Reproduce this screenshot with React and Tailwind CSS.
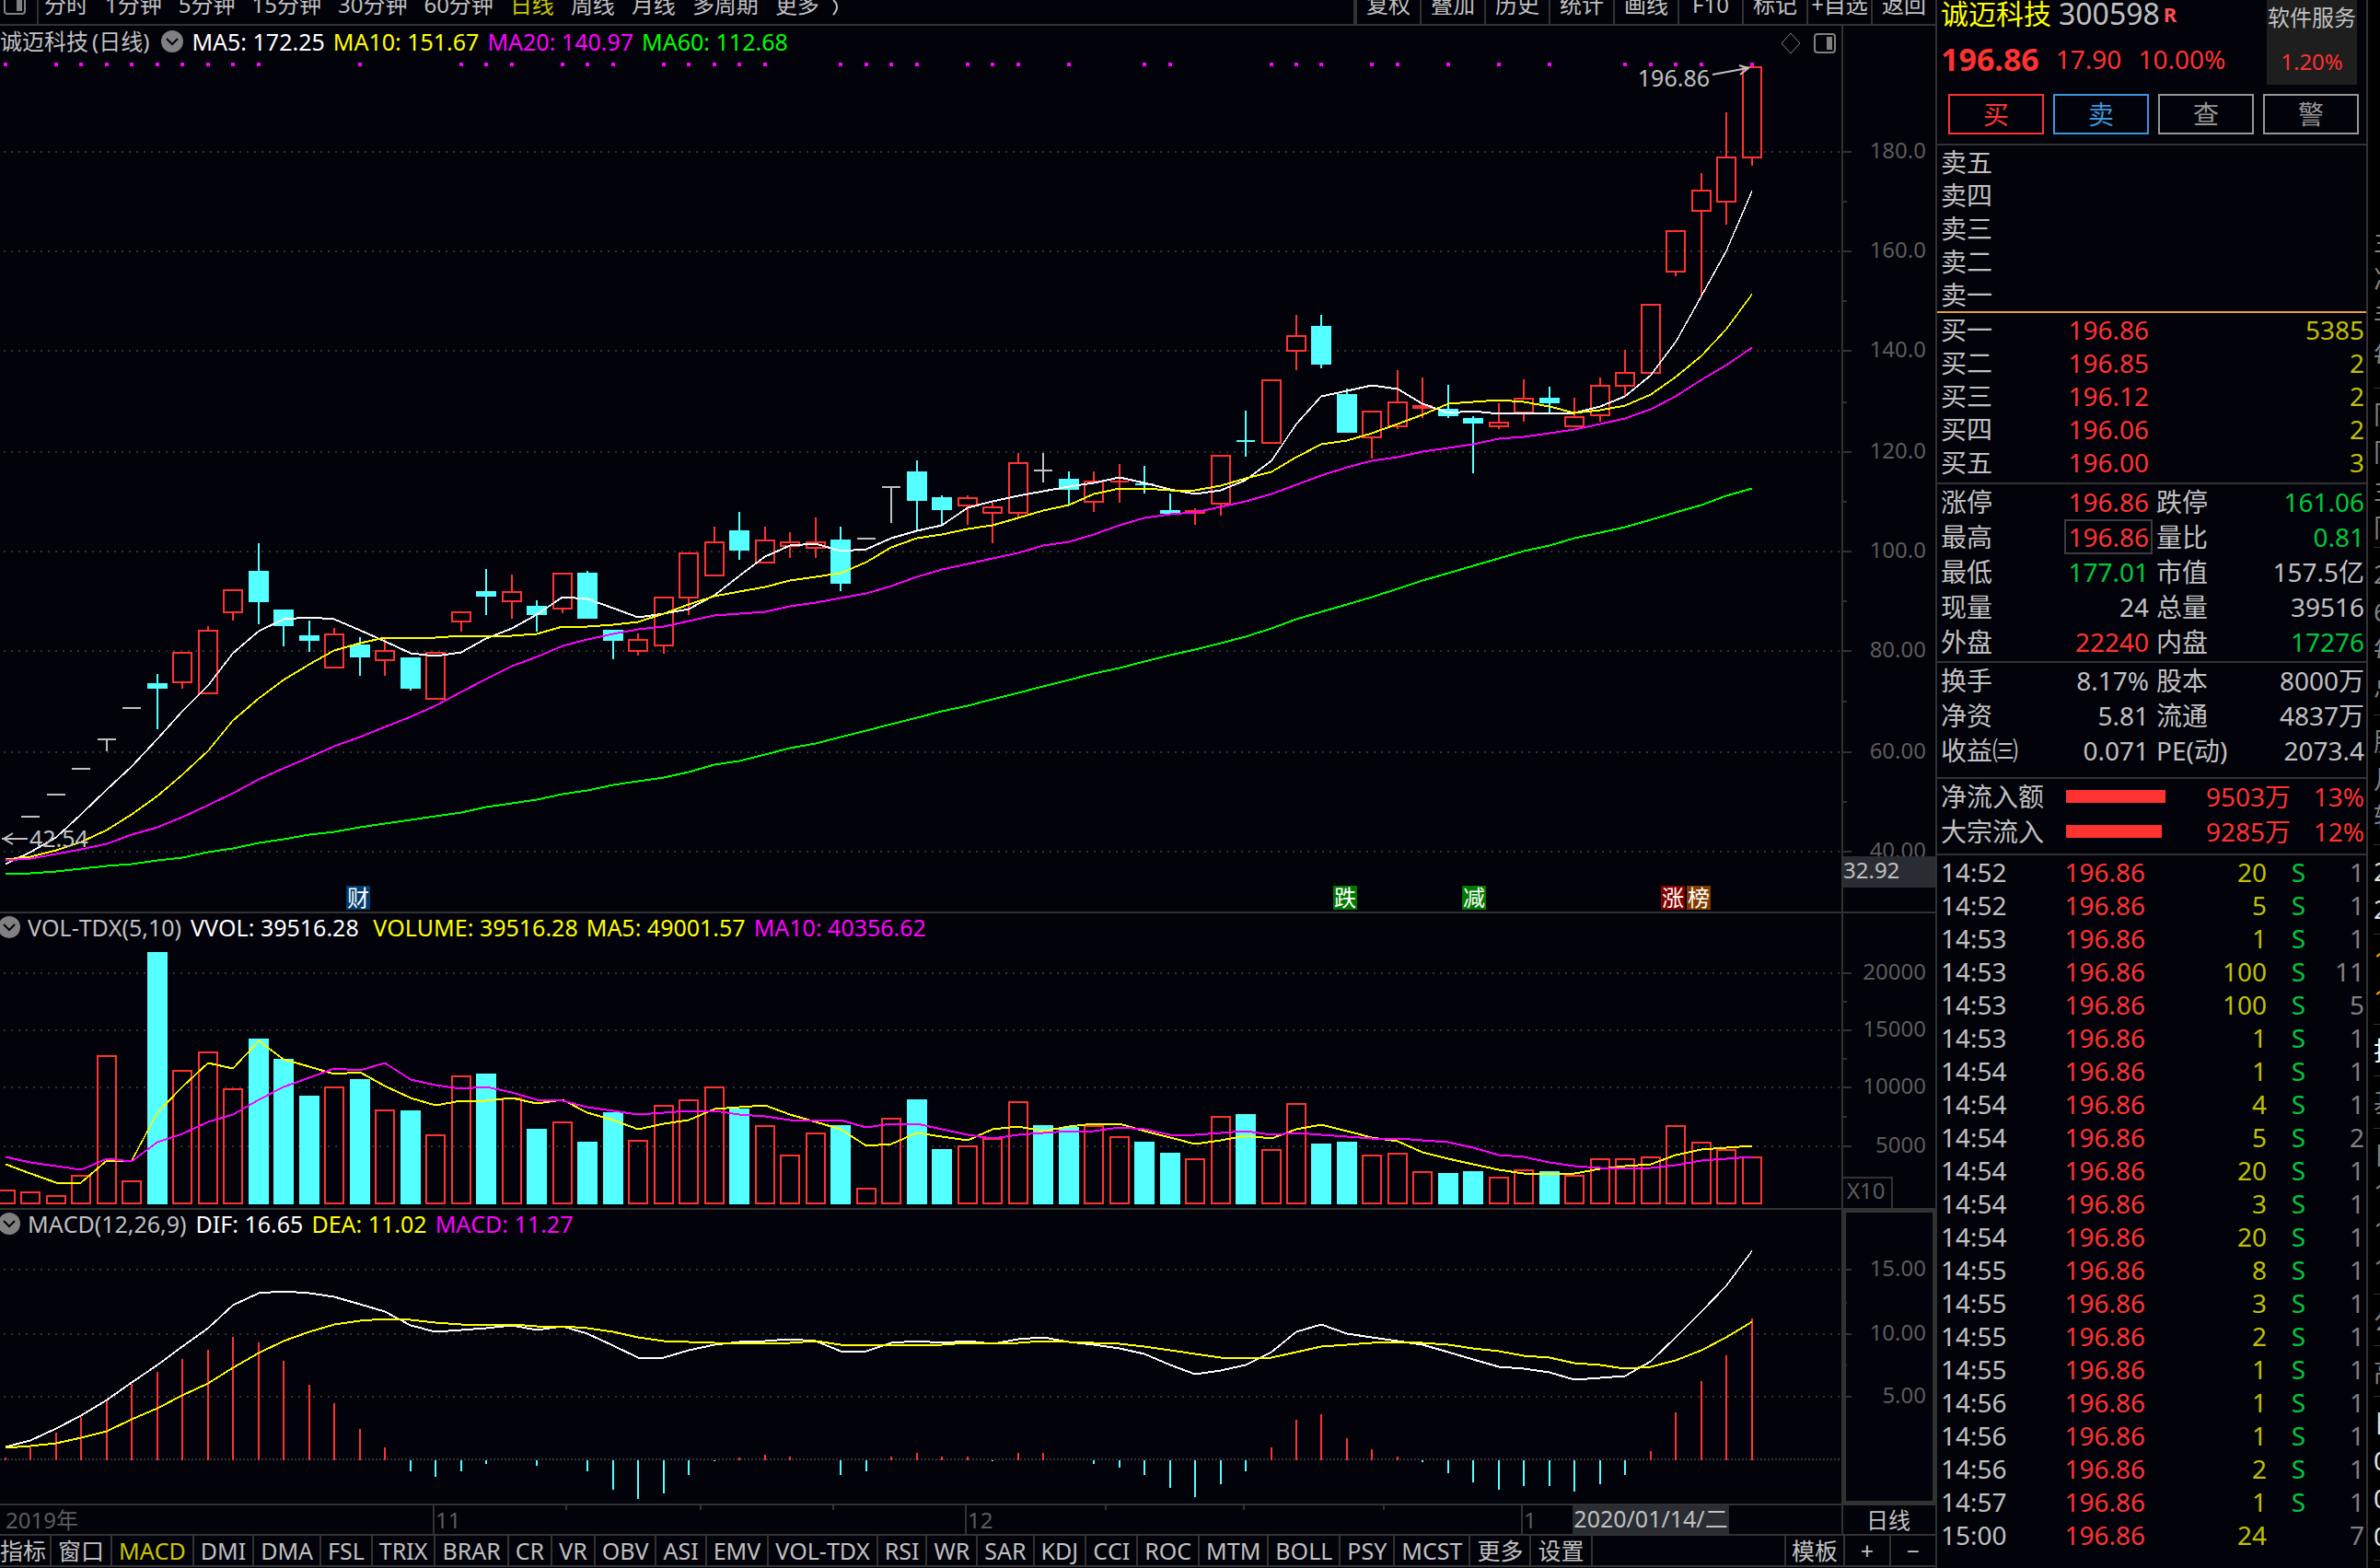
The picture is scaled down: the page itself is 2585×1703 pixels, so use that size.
// src/App.jsx
import { Fragment } from "react";

const RED = "#ff3232";
const CYAN = "#54ffff";
const GRAY = "#c0c0c0";
const LINE = "#323232";

const FIRST = 6;
const STEP = 27.49;
const cx = (i) => Math.round(FIRST + STEP * i);

// kind, high, top, bottom, low  (r = up, c = down, d = flat)
const candles = [
  ["d", 911, 911, 911, 911], ["d", 887, 887, 887, 887], ["d", 863, 863, 863, 863], ["d", 835, 835, 835, 835],
  ["d", 803, 803, 803, 816], ["d", 769, 769, 769, 769], ["c", 732, 742, 748, 792], ["r", 709, 709, 741, 748],
  ["r", 680, 685, 753, 753], ["r", 641, 641, 665, 674], ["c", 590, 620, 654, 678], ["c", 662, 662, 680, 702],
  ["c", 674, 690, 696, 708], ["r", 682, 689, 725, 725], ["c", 692, 700, 714, 734], ["r", 694, 707, 717, 734],
  ["c", 714, 714, 748, 750], ["r", 709, 709, 759, 759], ["r", 665, 665, 675, 686], ["c", 618, 642, 648, 668],
  ["r", 624, 643, 653, 672], ["c", 652, 658, 668, 686], ["r", 623, 623, 661, 666], ["c", 620, 622, 672, 672],
  ["c", 684, 684, 696, 716], ["r", 688, 695, 707, 712], ["r", 649, 649, 701, 710], ["r", 601, 601, 649, 668],
  ["r", 572, 589, 625, 625], ["c", 556, 576, 598, 608], ["r", 572, 587, 611, 611], ["r", 578, 589, 593, 606],
  ["r", 562, 589, 595, 606], ["c", 572, 586, 634, 642], ["d", 585, 585, 585, 585], ["d", 529, 529, 529, 568],
  ["c", 500, 512, 544, 576], ["c", 538, 540, 554, 570], ["r", 538, 541, 549, 570], ["r", 546, 551, 557, 590],
  ["r", 492, 503, 557, 563], ["d", 492, 511, 511, 524], ["c", 512, 520, 532, 548], ["r", 512, 523, 545, 556],
  ["r", 504, 523, 523, 546], ["c", 506, 526, 526, 536], ["c", 536, 554, 558, 558], ["r", 552, 555, 557, 570],
  ["r", 495, 495, 547, 560], ["c", 446, 479, 479, 496], ["r", 413, 413, 481, 481], ["r", 342, 365, 381, 402],
  ["c", 342, 354, 396, 400], ["c", 422, 428, 470, 470], ["r", 447, 447, 475, 498], ["r", 402, 437, 463, 466],
  ["r", 410, 441, 443, 454], ["c", 418, 444, 452, 454], ["c", 452, 454, 460, 514], ["r", 438, 459, 463, 466],
  ["r", 412, 433, 448, 458], ["c", 420, 432, 438, 448], ["r", 432, 453, 463, 463], ["r", 410, 419, 451, 458],
  ["r", 380, 405, 419, 430], ["r", 331, 331, 405, 405], ["r", 251, 251, 295, 300], ["r", 188, 207, 229, 322],
  ["r", 122, 171, 219, 244], ["r", 73, 73, 171, 180],
];

const ma5 = [939, 926, 910, 885, 858, 833, 803, 773, 745, 710, 686, 673, 671, 673, 685, 697, 710, 713, 709, 694, 683, 668, 649, 651, 661, 671, 667, 662, 647, 626, 605, 593, 591, 599, 597, 585, 577, 571, 552, 545, 539, 534, 529, 525, 519, 525, 532, 537, 533, 522, 501, 461, 431, 425, 419, 423, 439, 449, 447, 450, 449, 449, 449, 442, 431, 408, 372, 322, 273, 208];
const ma10 = [934, 931, 924, 915, 902, 885, 865, 842, 816, 783, 759, 739, 722, 707, 699, 693, 693, 693, 691, 691, 691, 689, 681, 681, 679, 676, 667, 657, 648, 643, 638, 631, 627, 623, 611, 595, 585, 581, 575, 571, 563, 555, 549, 537, 531, 531, 533, 533, 528, 520, 513, 497, 483, 479, 471, 461, 451, 439, 437, 435, 437, 442, 449, 446, 441, 429, 410, 387, 358, 320];
const ma20 = [935, 933, 928, 923, 917, 907, 899, 888, 875, 862, 847, 835, 823, 811, 801, 790, 779, 767, 752, 738, 724, 714, 702, 695, 689, 684, 681, 675, 669, 667, 665, 659, 655, 650, 645, 637, 627, 619, 613, 607, 601, 593, 589, 581, 571, 563, 559, 557, 551, 545, 537, 527, 517, 508, 501, 497, 491, 487, 483, 477, 475, 471, 467, 461, 455, 445, 431, 413, 397, 378];
const ma60 = [949, 949, 947, 944, 941, 939, 935, 932, 926, 922, 916, 912, 907, 904, 899, 895, 891, 887, 883, 877, 873, 869, 863, 859, 853, 849, 845, 839, 831, 827, 820, 813, 808, 801, 794, 787, 780, 773, 767, 760, 753, 746, 739, 732, 726, 719, 712, 706, 699, 692, 683, 673, 665, 657, 649, 640, 631, 623, 615, 607, 599, 593, 585, 579, 573, 565, 557, 549, 539, 531];

const volKinds = "rrrrrrcrrrcccrcrcrrcrcrccrrrrcrrrcrrccrrrccrrccrrcrrccrrrccrrcrrrrrrrr";
const volTops = [1293, 1295, 1299, 1277, 1147, 1283, 1034, 1163, 1143, 1183, 1128, 1150, 1190, 1181, 1172, 1206, 1206, 1233, 1169, 1166, 1193, 1226, 1219, 1240, 1208, 1239, 1201, 1195, 1181, 1204, 1223, 1255, 1231, 1222, 1291, 1215, 1194, 1248, 1245, 1237, 1197, 1222, 1224, 1223, 1235, 1240, 1252, 1259, 1213, 1210, 1249, 1199, 1242, 1240, 1255, 1253, 1273, 1274, 1272, 1279, 1271, 1272, 1277, 1259, 1259, 1257, 1223, 1241, 1249, 1257];
const volMa5 = [1265, 1275, 1285, 1285, 1261, 1261, 1209, 1181, 1155, 1161, 1131, 1151, 1159, 1167, 1165, 1180, 1193, 1201, 1196, 1196, 1193, 1199, 1195, 1209, 1217, 1227, 1221, 1217, 1205, 1203, 1201, 1211, 1219, 1227, 1245, 1243, 1231, 1235, 1239, 1227, 1224, 1229, 1224, 1221, 1221, 1229, 1236, 1243, 1239, 1234, 1237, 1227, 1222, 1229, 1236, 1240, 1252, 1259, 1265, 1271, 1275, 1275, 1275, 1270, 1267, 1265, 1255, 1249, 1247, 1245];
const volMa10 = [1257, 1263, 1267, 1271, 1259, 1262, 1241, 1232, 1219, 1211, 1195, 1181, 1171, 1161, 1163, 1155, 1173, 1179, 1183, 1181, 1187, 1195, 1196, 1203, 1207, 1211, 1209, 1207, 1207, 1211, 1213, 1217, 1217, 1217, 1225, 1221, 1221, 1227, 1233, 1237, 1233, 1231, 1229, 1229, 1225, 1227, 1233, 1233, 1231, 1229, 1233, 1231, 1233, 1235, 1237, 1237, 1239, 1241, 1247, 1255, 1257, 1263, 1267, 1269, 1269, 1269, 1266, 1261, 1259, 1257];

const dif = [1572, 1565, 1552, 1538, 1521, 1502, 1483, 1463, 1443, 1418, 1405, 1403, 1405, 1409, 1417, 1425, 1440, 1447, 1445, 1443, 1440, 1445, 1441, 1449, 1462, 1475, 1475, 1467, 1461, 1458, 1457, 1455, 1457, 1468, 1468, 1459, 1457, 1459, 1457, 1460, 1455, 1453, 1458, 1461, 1465, 1471, 1483, 1493, 1489, 1483, 1469, 1447, 1439, 1449, 1453, 1457, 1461, 1469, 1477, 1485, 1487, 1491, 1499, 1497, 1495, 1479, 1453, 1425, 1397, 1359];
const dea = [1573, 1571, 1568, 1562, 1555, 1542, 1530, 1516, 1503, 1486, 1470, 1457, 1447, 1439, 1435, 1433, 1434, 1437, 1439, 1439, 1439, 1441, 1441, 1443, 1447, 1453, 1457, 1458, 1459, 1459, 1459, 1459, 1457, 1461, 1461, 1461, 1461, 1461, 1459, 1459, 1459, 1457, 1458, 1459, 1460, 1463, 1467, 1471, 1475, 1476, 1475, 1469, 1463, 1461, 1459, 1458, 1459, 1461, 1465, 1468, 1473, 1475, 1481, 1483, 1487, 1485, 1478, 1467, 1453, 1436];
const hist = [1583, 1572, 1556, 1539, 1521, 1503, 1490, 1476, 1466, 1452, 1458, 1478, 1504, 1524, 1552, 1572, 1598, 1604, 1598, 1590, 1585, 1592, 1585, 1598, 1618, 1628, 1622, 1602, 1587, 1583, 1580, 1582, 1585, 1602, 1598, 1582, 1578, 1582, 1582, 1587, 1578, 1578, 1585, 1590, 1594, 1602, 1616, 1626, 1612, 1598, 1572, 1542, 1536, 1562, 1574, 1582, 1588, 1600, 1610, 1618, 1614, 1614, 1620, 1612, 1602, 1576, 1534, 1500, 1472, 1432];

const signals = [0, 2, 3, 4, 5, 6, 7, 8, 9, 10, 14, 18, 19, 20, 22, 23, 24, 26, 27, 28, 29, 30, 33, 34, 35, 36, 38, 39, 40, 42, 45, 46, 50, 51, 52, 54, 55, 57, 59, 61, 64, 65, 66, 67, 69];

const events = [
  { x: 376, text: "财", fill: "#003c6e" },
  { x: 1448, text: "跌", fill: "#007800" },
  { x: 1588, text: "减", fill: "#007800" },
  { x: 1804, text: "涨", fill: "#820000" },
  { x: 1832, text: "榜", fill: "#823c00" },
];

const priceTicks = [[165, "180.0"], [273, "160.0"], [381, "140.0"], [491, "120.0"], [599, "100.0"], [707, "80.00"], [817, "60.00"], [925, "40.00"]];
const volTicks = [[1057, "20000"], [1119, "15000"], [1181, "10000"], [1245, "5000"]];
const macdTicks = [[1379, "15.00"], [1449, "10.00"], [1517, "5.00"]];

const periods = ["分时", "1分钟", "5分钟", "15分钟", "30分钟", "60分钟", "日线", "周线", "月线", "多周期", "更多"];
const tools = ["复权", "叠加", "历史", "统计", "画线", "F10", "标记", "+自选", "返回"];
const indicators = ["指标", "窗口", "MACD", "DMI", "DMA", "FSL", "TRIX", "BRAR", "CR", "VR", "OBV", "ASI", "EMV", "VOL-TDX", "RSI", "WR", "SAR", "KDJ", "CCI", "ROC", "MTM", "BOLL", "PSY", "MCST", "更多", "设置"];

const bids = [["买一", "196.86", "5385"], ["买二", "196.85", "2"], ["买三", "196.12", "2"], ["买四", "196.06", "2"], ["买五", "196.00", "3"]];
const asks = ["卖五", "卖四", "卖三", "卖二", "卖一"];

const UP = "text-[#ff3232]";
const DOWN = "text-[#00c83c]";
const PLAIN = "text-[#c0c0c0]";

const stats = [
  ["涨停", "196.86", UP, "跌停", "161.06", DOWN],
  ["最高", "196.86", UP, "量比", "0.81", DOWN],
  ["最低", "177.01", DOWN, "市值", "157.5亿", PLAIN],
  ["现量", "24", PLAIN, "总量", "39516", PLAIN],
  ["外盘", "22240", UP, "内盘", "17276", DOWN],
];
const basics = [
  ["换手", "8.17%", PLAIN, "股本", "8000万", PLAIN],
  ["净资", "5.81", PLAIN, "流通", "4837万", PLAIN],
  ["收益㈢", "0.071", PLAIN, "PE(动)", "2073.4", PLAIN],
];
const flows = [["净流入额", 108, "9503万", "13%"], ["大宗流入", 104, "9285万", "12%"]];

const trades = [
  ["14:52", 20, 1], ["14:52", 5, 1], ["14:53", 1, 1], ["14:53", 100, 11], ["14:53", 100, 5], ["14:53", 1, 1],
  ["14:54", 1, 1], ["14:54", 4, 1], ["14:54", 5, 2], ["14:54", 20, 1], ["14:54", 3, 1], ["14:54", 20, 1],
  ["14:55", 8, 1], ["14:55", 3, 1], ["14:55", 2, 1], ["14:55", 1, 1], ["14:56", 1, 1], ["14:56", 1, 1],
  ["14:56", 2, 1], ["14:57", 1, 1], ["15:00", 24, 7],
];

// neighbouring panel, only its first few pixels are visible
const edge = [
  { h: 188, rows: ["主", "净", "手", "每"] },
  { h: 173, rows: ["同", "同", "主", "同"] },
  { h: 182, rows: ["2", "6", "每", "总"] },
  { h: 141, rows: ["股", "月", "转"] },
  { h: 97, rows: ["2", "2"], color: "text-[#e0e0e0]" },
  { h: 98, rows: ["1", "1"], color: "text-[#ffa000]" },
  { h: 56, rows: ["指"], color: "text-white" },
  { h: 57, rows: ["基"] },
  { h: 180, rows: ["日", "1", "1", "1"] },
  { h: 56, rows: ["公"] },
  { h: 55, rows: ["高"] },
  { h: 178, rows: ["日", "0", "0", "0"], color: "text-[#e0e0e0]" },
];

// two hairlines one pixel apart keep steep parts thin
function Series({ data, color }) {
  return (
    <g fill="none" stroke={color} strokeWidth="1" shapeRendering="crispEdges">
      <polyline points={data.map((y, i) => `${cx(i)},${y - 1}`).join(" ")} />
      <polyline points={data.map((y, i) => `${cx(i)},${y}`).join(" ")} />
    </g>
  );
}

function Axis({ ticks, minor, top, bottom }) {
  return (
    <g>
      {ticks.map(([y, label]) => (
        <Fragment key={y}>
          <line x1="4" x2="2000" y1={y} y2={y} stroke={LINE} strokeWidth="2" strokeDasharray="2 6" />
          <line x1="2000" x2="2011" y1={y} y2={y} stroke={LINE} strokeWidth="2" />
          <text x="2092" y={y + 7} fontSize="24" fill="#5c5c5c" textAnchor="end">{label}</text>
        </Fragment>
      ))}
      {minor.map((y) => (
        <line key={y} x1="2000" x2="2006" y1={y} y2={y} stroke={LINE} strokeWidth="2" />
      ))}
      <line x1="2001" x2="2001" y1={top} y2={bottom} stroke={LINE} strokeWidth="2" />
    </g>
  );
}

function Candle({ i, row }) {
  const [kind, high, top, bottom, low] = row;
  const x = cx(i);
  const color = kind === "r" ? RED : kind === "c" ? CYAN : GRAY;
  const flat = bottom - top < 1;
  return (
    <g fill={color} shapeRendering="crispEdges">
      {top > high && <rect x={x - 1} y={high} width="2" height={top - high} />}
      {low > bottom && <rect x={x - 1} y={bottom} width="2" height={low - bottom} />}
      {flat && <rect x={x - 10} y={top - 1} width="20" height="2" />}
      {!flat && kind === "c" && <rect x={x - 11} y={top} width="22" height={bottom - top} />}
      {!flat && kind === "r" && (
        <rect x={x - 10} y={top} width="20" height={bottom - top} fill="none" stroke={RED} strokeWidth="2" />
      )}
    </g>
  );
}

function PriceChart() {
  return (
    <svg viewBox="0 28 2102 962" className="block h-auto w-full">
      <Axis ticks={priceTicks} minor={[219, 327, 437, 545, 653, 762, 871]} top={28} bottom={990} />
      {signals.map((i) => (
        <rect key={i} x={cx(i) - 2} y="68" width="4" height="4" fill="#ff00ff" />
      ))}
      {candles.map((row, i) => i > 0 && <Candle key={i} i={i} row={row} />)}
      <Series data={ma5} color="#ffffff" />
      <Series data={ma10} color="#ffff00" />
      <Series data={ma20} color="#ff00ff" />
      <Series data={ma60} color="#00ff00" />
      <path d="M30 911H2M14 905L4 911L14 917" fill="none" stroke={GRAY} strokeWidth="2" />
      <text x="32" y="920" fontSize="25" fill={GRAY}>42.54</text>
      <path d="M1860 81L1898 74M1889 71L1899 74L1890 81" fill="none" stroke={GRAY} strokeWidth="2" />
      <text x="1857" y="94" fontSize="25" fill={GRAY} textAnchor="end">196.86</text>
      <path d="M1945 36L1955 47L1945 58L1935 47Z" fill="none" stroke="#808080" strokeWidth="1" />
      <rect x="1971" y="37" width="22" height="20" rx="3" fill="none" stroke="#808080" strokeWidth="2" />
      <rect x="1984" y="40" width="6" height="14" fill="#808080" />
      {events.map((e) => (
        <g key={e.x}>
          <rect x={e.x} y="962" width="26" height="26" fill={e.fill} />
          <text x={e.x + 13} y="984" fontSize="24" fill="#ffffff" textAnchor="middle">{e.text}</text>
        </g>
      ))}
      <rect x="2002" y="930" width="100" height="34" fill="#2a2c33" />
      <text x="2002" y="954" fontSize="24" fill={GRAY}>32.92</text>
    </svg>
  );
}

function VolumeChart() {
  return (
    <svg viewBox="0 992 2102 320" className="block h-auto w-full">
      <Axis ticks={volTicks} minor={[1088, 1150, 1213]} top={992} bottom={1312} />
      {volTops.map((y, i) =>
        volKinds[i] === "c" ? (
          <rect key={i} x={cx(i) - 11} y={y} width="22" height={1308 - y} fill={CYAN} />
        ) : (
          <rect key={i} x={cx(i) - 10} y={y} width="20" height={1307 - y} fill="none" stroke={RED} strokeWidth="2" />
        )
      )}
      <Series data={volMa5} color="#ffff00" />
      <Series data={volMa10} color="#ff00ff" />
      <path d="M2002 1279H2055V1312" fill="none" stroke={LINE} strokeWidth="2" />
      <text x="2006" y="1302" fontSize="24" fill="#5c5c5c">X10</text>
    </svg>
  );
}

function MacdChart() {
  return (
    <svg viewBox="0 1314 2102 319" className="block h-auto w-full">
      <Axis ticks={macdTicks} minor={[1415, 1483]} top={1314} bottom={1633} />
      <rect x="2003" y="1315" width="98" height="317" fill="none" stroke={LINE} strokeWidth="4" />
      <line x1="0" x2="2000" y1="1585" y2="1585" stroke={LINE} strokeWidth="2" strokeDasharray="2 2" />
      {hist.map((y, i) => (
        <rect
          key={i}
          x={cx(i) - 1}
          y={Math.min(y, 1586)}
          width="2"
          height={Math.abs(1586 - y)}
          fill={y < 1585 ? RED : y > 1585 ? CYAN : "none"}
        />
      ))}
      <Series data={dif} color="#ffffff" />
      <Series data={dea} color="#ffff00" />
    </svg>
  );
}

function DateAxis() {
  return (
    <svg viewBox="0 1635 2102 31" className="block h-auto w-full">
      {[471, 1049, 1653, 2001].map((x) => (
        <line key={x} x1={x} x2={x} y1="1635" y2="1666" stroke={LINE} strokeWidth="2" />
      ))}
      {[615, 761, 905, 1201, 1351, 1503].map((x) => (
        <line key={x} x1={x} x2={x} y1="1635" y2="1640" stroke={LINE} strokeWidth="2" />
      ))}
      <g fontSize="24" fill="#5c5c5c">
        <text x="6" y="1660">2019年</text>
        <text x="473" y="1660">11</text>
        <text x="1051" y="1660">12</text>
        <text x="1655" y="1660">1</text>
      </g>
      <rect x="1708" y="1635" width="170" height="31" fill="#2a2c33" />
      <text x="1793" y="1659" fontSize="25" fill={GRAY} textAnchor="middle">2020/01/14/二</text>
      <text x="2051" y="1660" fontSize="24" fill={GRAY} textAnchor="middle">日线</text>
    </svg>
  );
}

function Legend({ title, items, circleFirst }) {
  const toggle = (
    <button type="button" aria-label="展开" className={circleFirst ? "-ml-[2px] mr-2 shrink-0" : "mx-[9px] shrink-0 pl-1"}>
      <svg width="24" height="24" viewBox="0 0 24 24" className="block">
        <circle cx="12" cy="12" r="12" fill="#808080" />
        <path d="M6 9L12 15L18 9" fill="none" stroke="#02020a" strokeWidth="2" />
      </svg>
    </button>
  );
  return (
    <div className={`absolute top-0 left-0 flex items-center text-[25px] whitespace-pre ${circleFirst ? "h-[30px] leading-[30px]" : "h-[34px] leading-[34px]"}`}>
      {circleFirst && toggle}
      {title}
      {!circleFirst && toggle}
      <div className={circleFirst ? "ml-[10px] flex gap-[9px]" : "flex gap-[9px]"}>
        {items.map(([text, color]) => (
          <span key={text} className={color}>{text}</span>
        ))}
      </div>
    </div>
  );
}

function StatsTable({ rows, boxed }) {
  return (
    <table className="w-full table-fixed text-[28px] leading-[38px]">
      <colgroup>
        <col className="w-[120px]" />
        <col className="w-[110px]" />
        <col className="w-[108px]" />
        <col />
      </colgroup>
      <tbody>
        {rows.map(([a, av, ac, b, bv, bc]) => (
          <tr key={a} className="h-[38px]">
            <th scope="row" className="pl-1 text-left font-normal whitespace-nowrap">{a}</th>
            <td className={`text-right ${ac}`}>
              {boxed === a ? (
                <span className="-mx-1 inline-block px-1 outline-2 -outline-offset-2 outline-[#3c3c3c]">{av}</span>
              ) : av}
            </td>
            <th scope="row" className="pl-2 text-left font-normal whitespace-nowrap">{b}</th>
            <td className={`pr-[2px] text-right whitespace-nowrap ${bc}`}>{bv}</td>
          </tr>
        ))}
      </tbody>
    </table>
  );
}

function QuotePanel() {
  return (
    <aside className="w-[470px] shrink-0 border-x-2 border-[#323232] text-[28px]">
      <header className="h-[158px] border-b-2 border-[#323232]">
        <div className="flex justify-between">
          <div className="pl-1">
            <h1 className="flex h-[30px] items-center gap-2 leading-[30px]">
              <span className="text-[30px] text-[#ffff00]">诚迈科技</span>
              <span className="text-[32px]">300598</span>
              <span className="-ml-1 text-[22px] leading-[22px] font-bold text-[#ff5050]">R</span>
            </h1>
            <div className="mt-[10px] flex h-12 items-center gap-[18px] text-[#ff3232]">
              <strong className="text-[34px] font-bold">196.86</strong>
              <span>17.90</span>
              <span>10.00%</span>
            </div>
          </div>
          <a href="#sector" className="mr-[10px] flex h-[92px] w-[98px] flex-col items-center gap-[10px] bg-[#1e1e1e] text-[24px] leading-[38px]">
            <span className="whitespace-nowrap">软件服务</span>
            <span className="text-[#ff3232]">1.20%</span>
          </a>
        </div>
        <div className="mt-[10px] grid grid-cols-4 gap-[10px] pr-2 pl-3 leading-10">
          <button type="button" className="border-2 border-[#ff3232] text-[#ff3232]">买</button>
          <button type="button" className="border-2 border-[#3c96dc] text-[#3c96dc]">卖</button>
          <button type="button" className="border-2 border-[#969696] text-[#969696]">查</button>
          <button type="button" className="border-2 border-[#969696] text-[#969696]">警</button>
        </div>
      </header>

      <ul className="h-[182px] border-b-2 border-[#e6a03c] pl-1 leading-9">
        {asks.map((a) => <li key={a}>{a}</li>)}
      </ul>

      <div className="h-[186px] border-b-2 border-[#323232]">
        <table className="w-full table-fixed leading-9">
          <tbody>
            {bids.map(([label, price, amount]) => (
              <tr key={label} className="h-9">
                <th scope="row" className="w-[120px] pl-1 text-left font-normal">{label}</th>
                <td className="w-[110px] text-right text-[#ff3232]">{price}</td>
                <td className="pr-[2px] text-right text-[#c0c000]">{amount}</td>
              </tr>
            ))}
          </tbody>
        </table>
      </div>

      <div className="h-[194px] border-b-2 border-[#323232]">
        <StatsTable rows={stats} boxed="最高" />
      </div>
      <div className="h-[126px] border-b-2 border-[#323232]">
        <StatsTable rows={basics} />
      </div>

      <div className="h-[83px] border-b-2 border-[#323232]">
        {flows.map(([label, width, amount, pct]) => (
          <div key={label} className="flex h-[38px] items-center pl-1 leading-[38px] text-[#ff3232]">
            <span className="w-[136px] text-[#c0c0c0]">{label}</span>
            <span className="w-[120px]">
              <span className="block h-[14px] bg-[#ff3232]" style={{ width }} />
            </span>
            <span className="w-[124px] text-right">{amount}</span>
            <span className="w-[80px] text-right">{pct}</span>
          </div>
        ))}
      </div>

      <table className="w-full table-fixed leading-9">
        <tbody>
          {trades.map(([time, vol, count], i) => (
            <tr key={i} className="h-9">
              <td className="w-[116px] pl-1">{time}</td>
              <td className="w-[110px] text-right text-[#ff3232]">196.86</td>
              <td className="w-[132px] text-right text-[#c0c000]">{vol}</td>
              <td className="w-[50px] pr-2 text-right text-[#00c83c]">{time === "15:00" ? "" : "S"}</td>
              <td className="pr-[2px] text-right text-[#808080]">{count}</td>
            </tr>
          ))}
        </tbody>
      </table>
    </aside>
  );
}

function EdgePanel() {
  return (
    <div className="w-[13px] shrink-0 overflow-hidden bg-black pt-[234px] pl-[6px] text-[28px] leading-[41px] text-[#808080]">
      {edge.map((s, i) => (
        <div key={i} className="overflow-hidden border-b border-[#323232] pt-2" style={{ height: s.h }}>
          {s.rows.map((r, j) => (
            <div key={j} className={s.color}>{r}</div>
          ))}
        </div>
      ))}
    </div>
  );
}

export default function App() {
  return (
    <div className="flex min-h-screen overflow-hidden bg-[#02020a] font-['Noto_Sans','Noto_Sans_CJK_SC',sans-serif] text-[#c0c0c0] [font-kerning:none]">
      <main className="min-w-0 flex-1">
        <div className="flex h-7 justify-between overflow-hidden border-b-2 border-[#323232] text-[24px] leading-[10px]">
          <nav className="flex">
            <button type="button" aria-label="面板" className="w-[42px] border-r-2 border-[#323232] pl-1">
              <svg width="24" height="26" viewBox="0 0 24 26" className="block">
                <path d="M1 0V12Q1 15 4 15H20Q23 15 23 12V0" fill="none" stroke="#808080" strokeWidth="2" />
                <rect x="14" y="0" width="6" height="12" fill="#808080" />
              </svg>
            </button>
            <div className="flex items-start gap-[18px] pl-[6px]">
              {periods.map((p) => (
                <button key={p} type="button" className={p === "日线" ? "text-[#c8c800]" : ""}>{p}</button>
              ))}
              <svg width="10" height="18" viewBox="0 0 10 18" className="-ml-1">
                <path d="M1 0Q9 7 1 16" fill="none" stroke={GRAY} strokeWidth="2" />
              </svg>
            </div>
          </nav>
          <div className="flex border-l-2 border-[#323232]">
            {tools.map((t) => (
              <button key={t} type="button" className="flex w-[70px] justify-center border-l-2 border-[#323232] whitespace-nowrap">{t}</button>
            ))}
          </div>
        </div>

        <section className="relative border-b-2 border-[#323232]">
          <PriceChart />
          <Legend
            title={<><span className="text-[24px]">诚迈科技</span><span className="ml-1 text-[24px]">(日线)</span></>}
            items={[
              ["MA5: 172.25", "text-white"],
              ["MA10: 151.67", "text-[#ffff00]"],
              ["MA20: 140.97", "text-[#ff00ff]"],
              ["MA60: 112.68", "text-[#00ff00]"],
            ]}
          />
        </section>

        <section className="relative border-b-2 border-[#323232]">
          <VolumeChart />
          <Legend
            circleFirst
            title="VOL-TDX(5,10)"
            items={[
              ["VVOL: 39516.28 ", "text-white"],
              ["VOLUME: 39516.28", "text-[#ffff00]"],
              ["MA5: 49001.57", "text-[#ffff00]"],
              ["MA10: 40356.62", "text-[#ff00ff]"],
            ]}
          />
        </section>

        <section className="relative border-b-2 border-[#323232]">
          <MacdChart />
          <Legend
            circleFirst
            title="MACD(12,26,9)"
            items={[
              ["DIF: 16.65", "text-white"],
              ["DEA: 11.02", "text-[#ffff00]"],
              ["MACD: 11.27", "text-[#ff00ff]"],
            ]}
          />
        </section>

        <div className="border-b-2 border-[#323232]">
          <DateAxis />
        </div>

        <div className="flex h-[34px] justify-between overflow-hidden border-b-2 border-[#323232] text-[25px] leading-8">
          <nav className="flex">
            {indicators.map((name, i) => (
              <button
                key={i}
                type="button"
                className={`border-r-2 border-[#323232] whitespace-nowrap ${i === 0 ? "pr-1 pl-0" : "px-[7px]"} ${name === "MACD" ? "text-[#c8c800]" : ""}`}
              >
                {name}
              </button>
            ))}
          </nav>
          <div className="flex">
            <button type="button" className="w-[64px] border-l-2 border-[#323232]">模板</button>
            <button type="button" className="w-[50px] border-l-2 border-[#323232]">+</button>
            <button type="button" className="w-[50px] border-l-2 border-[#323232]">−</button>
          </div>
        </div>
      </main>
      <QuotePanel />
      <EdgePanel />
    </div>
  );
}
